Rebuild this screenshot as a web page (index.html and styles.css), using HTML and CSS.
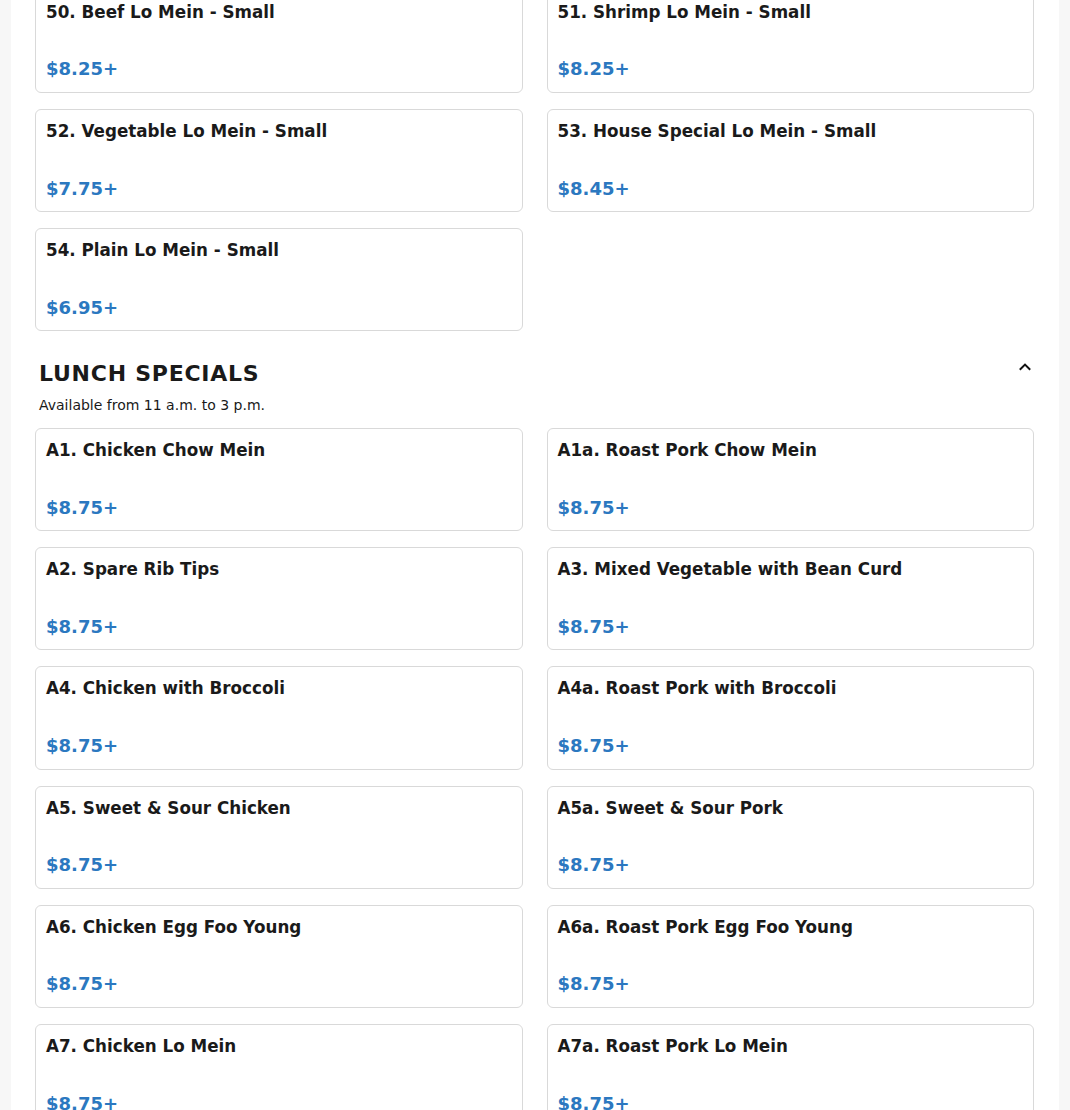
FILE: index.html
```html
<!DOCTYPE html>
<html lang="en">
<head>
<meta charset="utf-8">
<title>Menu</title>
<link rel="stylesheet" href="styles.css">
</head>
<body>
<main class="page">
  <section class="section section-top">
    <div class="grid">
      <div class="card"><h3 class="item-name">50. Beef Lo Mein - Small</h3><div class="price">$8.25+</div></div>
      <div class="card"><h3 class="item-name">51. Shrimp Lo Mein - Small</h3><div class="price">$8.25+</div></div>
      <div class="card"><h3 class="item-name">52. Vegetable Lo Mein - Small</h3><div class="price">$7.75+</div></div>
      <div class="card"><h3 class="item-name">53. House Special Lo Mein - Small</h3><div class="price">$8.45+</div></div>
      <div class="card"><h3 class="item-name">54. Plain Lo Mein - Small</h3><div class="price">$6.95+</div></div>
    </div>
  </section>
  <section class="section">
    <div class="section-head">
      <div>
        <h2 class="section-title">LUNCH SPECIALS</h2>
        <p class="section-desc">Available from 11 a.m. to 3 p.m.</p>
      </div>
      <svg class="chevron" width="14" height="10" viewBox="0 0 14 10"><path d="M1.8 7.8 L7 2.6 L12.2 7.8" fill="none" stroke="#111" stroke-width="2"/></svg>
    </div>
    <div class="grid">
      <div class="card"><h3 class="item-name">A1. Chicken Chow Mein</h3><div class="price">$8.75+</div></div>
      <div class="card"><h3 class="item-name">A1a. Roast Pork Chow Mein</h3><div class="price">$8.75+</div></div>
      <div class="card"><h3 class="item-name">A2. Spare Rib Tips</h3><div class="price">$8.75+</div></div>
      <div class="card"><h3 class="item-name">A3. Mixed Vegetable with Bean Curd</h3><div class="price">$8.75+</div></div>
      <div class="card"><h3 class="item-name">A4. Chicken with Broccoli</h3><div class="price">$8.75+</div></div>
      <div class="card"><h3 class="item-name">A4a. Roast Pork with Broccoli</h3><div class="price">$8.75+</div></div>
      <div class="card"><h3 class="item-name">A5. Sweet &amp; Sour Chicken</h3><div class="price">$8.75+</div></div>
      <div class="card"><h3 class="item-name">A5a. Sweet &amp; Sour Pork</h3><div class="price">$8.75+</div></div>
      <div class="card"><h3 class="item-name">A6. Chicken Egg Foo Young</h3><div class="price">$8.75+</div></div>
      <div class="card"><h3 class="item-name">A6a. Roast Pork Egg Foo Young</h3><div class="price">$8.75+</div></div>
      <div class="card"><h3 class="item-name">A7. Chicken Lo Mein</h3><div class="price">$8.75+</div></div>
      <div class="card"><h3 class="item-name">A7a. Roast Pork Lo Mein</h3><div class="price">$8.75+</div></div>
    </div>
  </section>
</main>
</body>
</html>
```
FILE: styles.css
```css
html, body {
  margin: 0;
  padding: 0;
  background: #f7f7f7;
  font-family: "DejaVu Sans", sans-serif;
  color: #1a1a1a;
}
.page {
  width: 1048px;
  margin: 0 0 0 11px;
  background: #fff;
  padding: 0 25px 40px 24px;
  box-sizing: border-box;
  min-height: 1200px;
  overflow: hidden;
}
.section-top {
  margin-top: -10.2px;
}
.grid {
  display: grid;
  grid-template-columns: 1fr 1fr;
  column-gap: 24px;
  row-gap: 16px;
}
.card {
  border: 1px solid #d9d9d9;
  border-radius: 6px;
  height: 103.2px;
  box-sizing: border-box;
  padding: 11px 10px 0 10px;
  display: flex;
  flex-direction: column;
}
.item-name {
  margin: 0;
  font-size: 16.75px;
  font-weight: bold;
  line-height: 1.2;
  color: #1a1a1a;
}
.price {
  margin-top: auto;
  margin-bottom: 10.6px;
  font-size: 18px;
  font-weight: bold;
  line-height: 24px;
  color: #2b78c0;
}
.section-head {
  display: flex;
  justify-content: space-between;
  align-items: flex-start;
  padding: 28px 2px 0 4px;
  margin-bottom: 12.6px;
}
.section-title {
  margin: 0;
  font-size: 22px;
  font-weight: bold;
  letter-spacing: 0.75px;
  line-height: 30px;
}
.section-desc {
  margin: 6px 0 0 0;
  font-size: 14px;
  line-height: 20px;
}
.chevron {
  margin-top: 3px;
}
```
